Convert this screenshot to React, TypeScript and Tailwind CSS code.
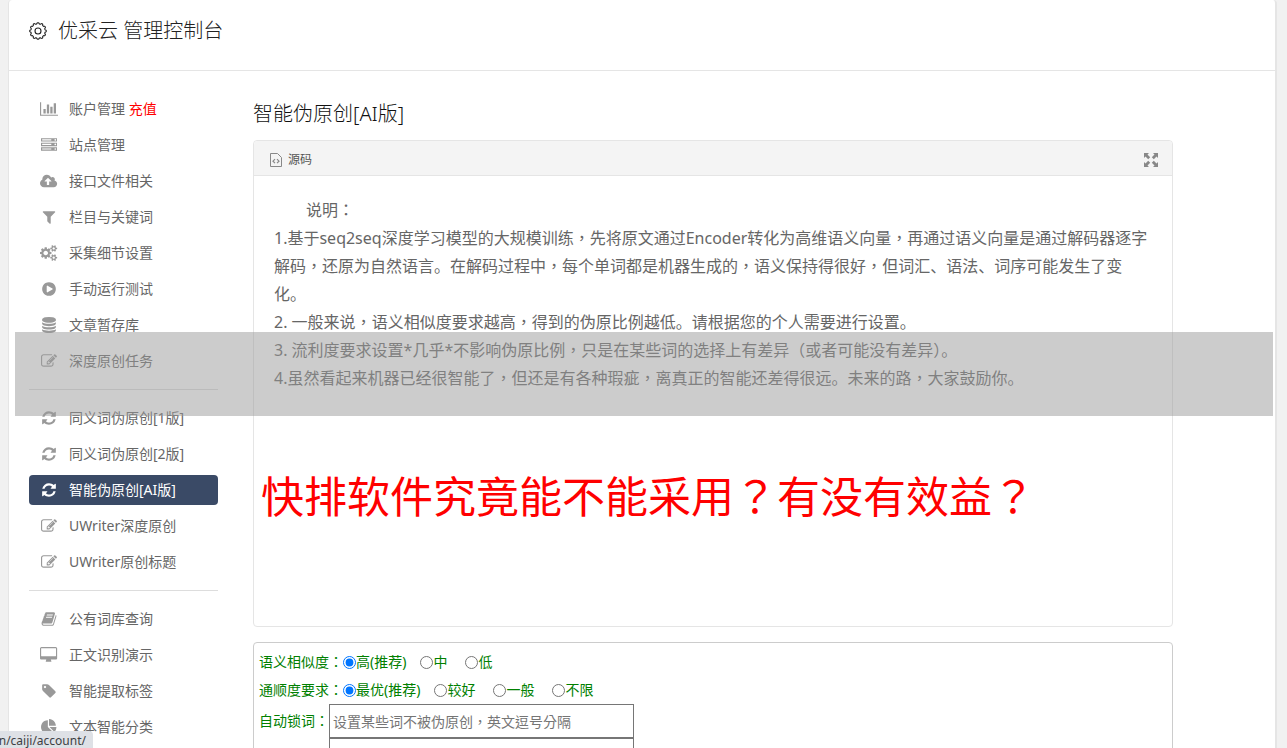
import { useState } from "react"

type IconName =
    | "chart" | "server" | "cloud" | "filter" | "cogs" | "play" | "database"
    | "edit" | "refresh" | "book" | "desktop" | "tag" | "pie"

// [viewBox width, path], all of them are 1792 high
const icons: Record<IconName, [number, string]> = {
    chart: [2048, "M640 896v512h-256v-512h256zM1024 384v1024h-256v-1024h256zM2048 1536v128h-2048v-1536h128v1408h1920zM1408 640v768h-256v-768h256zM1792 256v1152h-256v-1152h256z"],
    server: [1792, "M128 1408h1024v-128h-1024v128zm0-512h1024v-128h-1024v128zm1568 448q0-40-28-68t-68-28-68 28-28 68 28 68 68 28 68-28 28-68zm-1568-960h1024v-128h-1024v128zm1568 448q0-40-28-68t-68-28-68 28-28 68 28 68 68 28 68-28 28-68zm0-512q0-40-28-68t-68-28-68 28-28 68 28 68 68 28 68-28 28-68zm96 832v384h-1792v-384h1792zm0-512v384h-1792v-384h1792zm0-512v384h-1792v-384h1792z"],
    cloud: [1920, "M1280 928q0-14-9-23l-352-352q-9-9-23-9t-23 9l-351 351q-10 12-10 24 0 14 9 23t23 9h224v352q0 13 9.5 22.5t22.5 9.5h192q13 0 22.5-9.5t9.5-22.5v-352h224q13 0 22.5-9.5t9.5-22.5zm640 288q0 159-112.5 271.5t-271.5 112.5h-1088q-185 0-316.5-131.5t-131.5-316.5q0-130 70-240t188-165q-2-30-2-43 0-212 150-362t362-150q156 0 285.5 87t188.5 231q71-62 166-62 106 0 181 75t75 181q0 76-41 138 130 31 213.5 135.5t83.5 238.5z"],
    filter: [1792, "M1595 295q17 41-14 70l-493 493v742q0 42-39 59-13 5-25 5-27 0-45-19l-256-256q-19-19-19-45v-486l-493-493q-31-29-14-70 17-39 59-39h1280q42 0 59 39z"],
    cogs: [1920, "M896 896q0-106-75-181t-181-75-181 75-75 181 75 181 181 75 181-75 75-181zm768 512q0-52-38-90t-90-38-90 38-38 90q0 53 37.5 90.5t90.5 37.5 90.5-37.5 37.5-90.5zm0-1024q0-52-38-90t-90-38-90 38-38 90q0 53 37.5 90.5t90.5 37.5 90.5-37.5 37.5-90.5zm-384 421v185q0 10-7 19.5t-16 10.5l-155 24q-11 35-32 76 34 48 90 115 7 11 7 20 0 12-7 19-23 30-82.5 89.5t-78.5 59.5q-11 0-21-7l-115-90q-37 19-77 31-11 108-23 155-7 24-30 24h-186q-11 0-20-7.5t-10-17.5l-23-153q-34-10-75-31l-118 89q-7 7-20 7-11 0-21-8-144-133-144-160 0-9 7-19 10-14 41-53t47-61q-23-44-35-82l-152-24q-10-1-17-9.5t-7-19.5v-185q0-10 7-19.5t16-10.5l155-24q11-35 32-76-34-48-90-115-7-11-7-20 0-12 7-20 22-30 82-89t79-59q11 0 21 7l115 90q34-18 77-32 11-108 23-154 7-24 30-24h186q11 0 20 7.5t10 17.5l23 153q34 10 75 31l118-89q8-7 20-7 11 0 21 8 144 133 144 160 0 8-7 19-12 16-42 54t-45 60q23 48 34 82l152 23q10 2 17 10.5t7 19.5zm640 533v140q0 16-149 31-12 27-30 52 51 113 51 138 0 4-4 7-122 71-124 71-8 0-46-47t-52-68q-20 2-30 2t-30-2q-14 21-52 68t-46 47q-2 0-124-71-4-3-4-7 0-25 51-138-18-25-30-52-149-15-149-31v-140q0-16 149-31 13-29 30-52-51-113-51-138 0-4 4-7 4-2 35-20t59-34 30-16q8 0 46 46.5t52 67.5q20-2 30-2t30 2q51-71 92-112l6-2q4 0 124 70 4 3 4 7 0 25-51 138 17 23 30 52 149 15 149 31zm0-1024v140q0 16-149 31-12 27-30 52 51 113 51 138 0 4-4 7-122 71-124 71-8 0-46-47t-52-68q-20 2-30 2t-30-2q-14 21-52 68t-46 47q-2 0-124-71-4-3-4-7 0-25 51-138-18-25-30-52-149-15-149-31v-140q0-16 149-31 13-29 30-52-51-113-51-138 0-4 4-7 4-2 35-20t59-34 30-16q8 0 46 46.5t52 67.5q20-2 30-2t30 2q51-71 92-112l6-2q4 0 124 70 4 3 4 7 0 25-51 138 17 23 30 52 149 15 149 31z"],
    play: [1792, "M896 128q209 0 385.5 103t279.5 279.5 103 385.5-103 385.5-279.5 279.5-385.5 103-385.5-103-279.5-279.5-103-385.5 103-385.5 279.5-279.5 385.5-103zm384 823q32-18 32-55t-32-55l-544-320q-31-19-64-1-32 19-32 56v640q0 37 32 56 16 8 32 8 17 0 32-9z"],
    database: [1792, "M896 768q237 0 443-43t325-127v170q0 69-103 128t-280 93.5-385 34.5-385-34.5-280-93.5-103-128v-170q119 84 325 127t443 43zm0 768q237 0 443-43t325-127v170q0 69-103 128t-280 93.5-385 34.5-385-34.5-280-93.5-103-128v-170q119 84 325 127t443 43zm0-384q237 0 443-43t325-127v170q0 69-103 128t-280 93.5-385 34.5-385-34.5-280-93.5-103-128v-170q119 84 325 127t443 43zm0-1152q208 0 385 34.5t280 93.5 103 128v128q0 69-103 128t-280 93.5-385 34.5-385-34.5-280-93.5-103-128v-128q0-69 103-128t280-93.5 385-34.5z"],
    edit: [1792, "M888 1184l116-116-152-152-116 116v56h96v96h56zm440-720q-16-16-33 1l-350 350q-17 17-1 33t33-1l350-350q17-17 1-33zm80 594v190q0 119-84.5 203.5t-203.5 84.5h-832q-119 0-203.5-84.5t-84.5-203.5v-832q0-119 84.5-203.5t203.5-84.5h832q63 0 117 25 15 7 18 23 3 17-9 29l-49 49q-14 14-32 8-23-6-45-6h-832q-66 0-113 47t-47 113v832q0 66 47 113t113 47h832q66 0 113-47t47-113v-126q0-13 9-22l64-64q15-15 35-7t20 29zm-96-738l288 288-672 672h-288v-288zm444 132l-92 92-288-288 92-92q28-28 68-28t68 28l152 152q28 28 28 68t-28 68z"],
    refresh: [1792, "M1639 1056q0 5-1 7-64 268-268 434.5t-478 166.5q-146 0-282.5-55t-243.5-157l-129 129q-19 19-45 19t-45-19-19-45v-448q0-26 19-45t45-19h448q26 0 45 19t19 45-19 45l-137 137q71 66 161 102t187 36q134 0 250-65t186-179q11-17 53-117 8-23 30-23h192q13 0 22.5 9.5t9.5 22.5zm25-800v448q0 26-19 45t-45 19h-448q-26 0-45-19t-19-45 19-45l138-138q-148-137-349-137-134 0-250 65t-186 179q-11 17-53 117-8 23-30 23h-199q-13 0-22.5-9.5t-9.5-22.5v-7q65-268 270-434.5t480-166.5q146 0 284 55.5t245 156.5l130-129q19-19 45-19t45 19 19 45z"],
    book: [1792, "M1703 478q40 57 18 129l-275 906q-19 64-76.5 107.5t-122.5 43.5h-923q-77 0-148.5-53.5t-99.5-131.5q-24-67-2-127 0-4 3-27t4-37q1-8-3-21.5t-3-19.5q2-11 8-21t16.5-23.5 16.5-23.5q23-38 45-91.5t30-91.5q3-10 .5-30t-.5-28q3-11 17-28t17-23q21-36 42-92t25-90q1-9-2.5-32t.5-28q4-13 22-30.5t22-22.5q19-26 42.5-84.5t27.5-96.5q1-8-3-25.5t-2-26.5q2-8 9-18t18-23 17-21q8-12 16.5-30.5t15-35 16-36 19.5-32 26.5-23.5 36-11.5 47.5 5.5l-1 3q38-9 51-9h761q74 0 114 56t18 130l-274 906q-36 119-71.5 153.5t-128.5 34.5h-869q-27 0-38 15-11 16-1 43 24 70 144 70h923q29 0 56-15.5t35-41.5l300-987q7-22 5-57 38 15 59 43zm-1064 2q-4 13 2 22.5t20 9.5h608q13 0 25.5-9.5t16.5-22.5l21-64q4-13-2-22.5t-20-9.5h-608q-13 0-25.5 9.5t-16.5 22.5zm-83 256q-4 13 2 22.5t20 9.5h608q13 0 25.5-9.5t16.5-22.5l21-64q4-13-2-22.5t-20-9.5h-608q-13 0-25.5 9.5t-16.5 22.5z"],
    desktop: [1920, "M1792 992v-832q0-13-9.5-22.5t-22.5-9.5h-1600q-13 0-22.5 9.5t-9.5 22.5v832q0 13 9.5 22.5t22.5 9.5h1600q13 0 22.5-9.5t9.5-22.5zm128-832v1088q0 66-47 113t-113 47h-544q0 37 16 77.5t32 71 16 43.5q0 26-19 45t-45 19h-512q-26 0-45-19t-19-45q0-14 16-44t32-70 16-78h-544q-66 0-113-47t-47-113v-1088q0-66 47-113t113-47h1600q66 0 113 47t47 113z"],
    tag: [1792, "M576 448q0-53-37.5-90.5t-90.5-37.5-90.5 37.5-37.5 90.5 37.5 90.5 90.5 37.5 90.5-37.5 37.5-90.5zm1067 576q0 53-37 90l-491 492q-39 37-91 37-53 0-90-37l-715-716q-38-37-64.5-101t-26.5-117v-416q0-52 38-90t90-38h416q53 0 117 26.5t102 64.5l715 714q37 39 37 91z"],
    pie: [1792, "M768 890l546 546q-106 108-247.5 168t-298.5 60q-209 0-385.5-103t-279.5-279.5-103-385.5 103-385.5 279.5-279.5 385.5-103v762zm187 6h773q0 157-60 298.5t-168 247.5zm709-128h-768v-768q209 0 385.5 103t279.5 279.5 103 385.5z"],
}

const Icon = ({ name }: { name: IconName }) => (
    <svg viewBox={`0 0 ${icons[name][0]} 1792`} className="h-4 w-auto" fill="currentColor" aria-hidden="true">
        <path d={icons[name][1]} />
    </svg>
)

// commas, colons and question marks sit in the middle of their square
const Text = ({ children }: { children: string }) => (
    <>
        {children.split(/([，：？])/).map((part, i) =>
            i % 2 ? <span key={i} className="font-['Noto_Sans','Noto_Sans_CJK_TC',sans-serif]" lang="zh-TW">{part}</span> : part
        )}
    </>
)

const menu: { icon: IconName; text: string; extra?: string }[][] = [
    [
        { icon: "chart", text: "账户管理", extra: "充值" },
        { icon: "server", text: "站点管理" },
        { icon: "cloud", text: "接口文件相关" },
        { icon: "filter", text: "栏目与关键词" },
        { icon: "cogs", text: "采集细节设置" },
        { icon: "play", text: "手动运行测试" },
        { icon: "database", text: "文章暂存库" },
        { icon: "edit", text: "深度原创任务" },
    ],
    [
        { icon: "refresh", text: "同义词伪原创[1版]" },
        { icon: "refresh", text: "同义词伪原创[2版]" },
        { icon: "refresh", text: "智能伪原创[AI版]" },
        { icon: "edit", text: "UWriter深度原创" },
        { icon: "edit", text: "UWriter原创标题" },
    ],
    [
        { icon: "book", text: "公有词库查询" },
        { icon: "desktop", text: "正文识别演示" },
        { icon: "tag", text: "智能提取标签" },
        { icon: "pie", text: "文本智能分类" },
    ],
]

const Sidebar = () => {
    const [active, setActive] = useState("智能伪原创[AI版]")

    return (
        <nav className="w-[189px] shrink-0 text-sm">
            {menu.map((group, i) => (
                <ul key={i} className={i > 0 ? "mt-[13px] flex flex-col gap-1.5 border-t border-[#ddd] pt-[13px]" : "flex flex-col gap-1.5"}>
                    {group.map((item) => (
                        <li key={item.text}>
                            <a
                                href="#"
                                onClick={() => setActive(item.text)}
                                className={
                                    item.text === active
                                        ? "flex h-[30px] items-center gap-2.5 rounded bg-[#3a4a66] pl-2.5 text-white"
                                        : "flex h-[30px] items-center gap-2.5 rounded pl-2.5 text-[#666]"
                                }
                            >
                                <span className={item.text === active ? "flex w-5 justify-center" : "flex w-5 justify-center text-[#999]"}>
                                    <Icon name={item.icon} />
                                </span>
                                <span>
                                    {item.text}
                                    {item.extra && <span className="text-[#f00]"> {item.extra}</span>}
                                </span>
                            </a>
                        </li>
                    ))}
                </ul>
            ))}
        </nav>
    )
}

const GearIcon = () => {
    // wavy outline with twelve soft teeth
    const points = Array.from({ length: 144 }, (_, i) => {
        const a = (i / 144) * Math.PI * 2
        const r = 7.7 + 0.6 * Math.tanh(2 * Math.cos(12 * a))
        return `${(9 + r * Math.sin(a)).toFixed(2)} ${(9 - r * Math.cos(a)).toFixed(2)}`
    })
    return (
        <svg viewBox="0 0 18 18" className="size-[18px]" fill="none" stroke="currentColor" strokeWidth="1.1" aria-hidden="true">
            <path d={`M${points.join("L")}Z`} />
            <circle cx="9" cy="9" r="3" />
        </svg>
    )
}

const SourceIcon = () => (
    <svg viewBox="0 0 12 14" className="h-3.5 w-3" fill="none" stroke="#888" aria-hidden="true">
        <path d="M.5 .5h7l4 4v9h-11z" />
        <path d="M5 6.200l-2 2 2 2M7 6.200l2 2-2 2" strokeWidth="1.200" />
    </svg>
)

const ExpandIcon = () => (
    <svg viewBox="0 0 14 14" className="size-3.5" fill="#888" aria-hidden="true">
        <path d="M0 0h5L3.500 1.500 6.200 4.200 4.200 6.200 1.500 3.500 0 5zM14 0v5L12.500 3.500 9.800 6.200 7.800 4.200 10.500 1.500 9 0zM0 14V9L1.500 10.500 4.200 7.800 6.200 9.800 3.500 12.500 5 14zM14 14H9L10.500 12.500 7.800 9.800 9.800 7.800 12.500 10.500 14 9z" />
    </svg>
)

const RadioRow = ({ title, name, options }: { title: string; name: string; options: string[] }) => (
    <fieldset className="flex h-7 items-center">
        <legend className="float-left"><Text>{title}</Text></legend>
        {options.map((option, i) => (
            <label key={option} className={i === 0 ? "mr-3.5 flex items-center" : "mr-[18px] flex items-center"}>
                <input type="radio" name={name} defaultChecked={i === 0} className="size-[13px]" />
                {option}
            </label>
        ))}
    </fieldset>
)

const App = () => {
    return (
        <div className="relative h-screen overflow-hidden bg-[#f1f1f1] px-2 font-['Noto_Sans','Noto_Sans_CJK_SC',sans-serif]">
            <div className="mr-0.5 min-h-full rounded-t border-r-2 border-l border-[#e5e5e5] bg-white">
                <header className="flex h-[71px] items-center gap-[11px] border-b border-[#e5e5e5] px-5 pb-2 text-[#222]">
                    <GearIcon />
                    <h1 className="text-xl font-light">优采云 管理控制台</h1>
                </header>

                <div className="flex gap-[35px] px-5 pt-[23px]">
                    <Sidebar />

                    <main className="min-w-0 max-w-[920px] flex-1">
                        <h2 className="pt-1 text-xl leading-8 font-light text-[#111]">智能伪原创[AI版]</h2>

                        <section className="mt-2.5 min-h-[487px] rounded border border-[#e5e5e5]">
                            <div className="flex h-[35px] items-center justify-between rounded-t border-b border-[#e5e5e5] bg-[#f4f4f4] pt-1 pr-3.5 pl-4">
                                <button type="button" className="flex items-center gap-1.5 text-xs text-[#555]">
                                    <SourceIcon />
                                    源码
                                </button>
                                <button type="button" aria-label="全屏">
                                    <ExpandIcon />
                                </button>
                            </div>
                            <div className="p-5 leading-7 text-[#666]">
                                <p className="indent-8"><Text>说明：</Text></p>
                                <p><Text>1.基于seq2seq深度学习模型的大规模训练，先将原文通过Encoder转化为高维语义向量，再通过语义向量是通过解码器逐字解码，还原为自然语言。在解码过程中，每个单词都是机器生成的，语义保持得很好，但词汇、语法、词序可能发生了变化。</Text></p>
                                <p><Text>2. 一般来说，语义相似度要求越高，得到的伪原比例越低。请根据您的个人需要进行设置。</Text></p>
                                <p><Text>3. 流利度要求设置*几乎*不影响伪原比例，只是在某些词的选择上有差异（或者可能没有差异）。</Text></p>
                                <p><Text>4.虽然看起来机器已经很智能了，但还是有各种瑕疵，离真正的智能还差得很远。未来的路，大家鼓励你。</Text></p>
                            </div>
                        </section>

                        <form className="mt-[15px] rounded border border-[#ccc] px-[5px] pt-[5px] text-sm text-[#008000]">
                            <RadioRow title="语义相似度：" name="similar" options={["高(推荐)", "中", "低"]} />
                            <RadioRow title="通顺度要求：" name="fluent" options={["最优(推荐)", "较好", "一般", "不限"]} />
                            <div className="flex items-center">
                                <label htmlFor="lock" className="w-[70px]"><Text>自动锁词：</Text></label>
                                <input id="lock" placeholder="设置某些词不被伪原创，英文逗号分隔" className="h-[34px] w-[305px] border border-[#767676] px-[3px] font-['Noto_Sans','Noto_Sans_CJK_TC',sans-serif] placeholder:text-[#757575]" />
                            </div>
                            <textarea aria-label="原文" className="ml-[70px] block h-[34px] w-[305px] resize-none border border-[#767676]" />
                        </form>
                    </main>
                </div>
            </div>

            {/* grey banner with the question under it */}
            <div className="pointer-events-none absolute top-[332px] right-3.5 left-[15px] h-[84px] bg-[#999]/50" />
            <p className="pointer-events-none absolute top-[465px] left-[261px] text-[43px] leading-[64px] text-[#f00]"><Text>快排软件究竟能不能采用？有没有效益？</Text></p>

            <div className="absolute bottom-0 left-0 flex h-[17px] w-[93px] items-end justify-end overflow-hidden rounded-tr bg-[#dee1e6] pr-[7px] text-xs leading-[14px] whitespace-nowrap text-[#3c4043]">
                n/caiji/account/
            </div>
        </div>
    )
}

export default App
